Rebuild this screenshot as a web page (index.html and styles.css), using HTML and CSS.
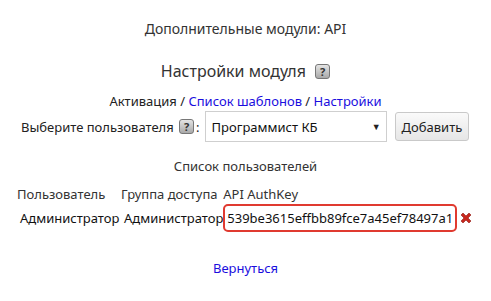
FILE: index.html
```html
<!DOCTYPE html>
<html lang="ru">
<head>
    <meta charset="UTF-8">
    <title>Дополнительные модули: API</title>
    <link rel="stylesheet" href="styles.css">
</head>
<body>
    <div class="page">
        <h1 class="title">Дополнительные модули: API</h1>

        <h2 class="subtitle">Настройки модуля <span class="help">?</span></h2>

        <div class="nav">
            <span>Активация</span> / <a href="#">Список шаблонов</a> / <a href="#">Настройки</a>
        </div>

        <!-- user picker -->
        <div class="pick-row">
            <label class="pick-label">Выберите пользователя <span class="help small">?</span>:</label>
            <div class="select-box">
                <span>Программист КБ</span>
                <span class="arrow">&#9660;</span>
            </div>
            <button class="btn">Добавить</button>
        </div>

        <div class="list-title">Список пользователей</div>

        <table class="users">
            <tr>
                <th class="col-user">Пользователь</th>
                <th class="col-group">Группа доступа</th>
                <th>API AuthKey</th>
                <th></th>
            </tr>
            <tr>
                <td>Администратор</td>
                <td>Администратор</td>
                <td class="key-cell"><span class="key">539be3615effbb89fce7a45ef78497a1</span></td>
                <td class="key-cell">
                    <svg class="del" width="14" height="14" viewBox="0 0 14 14">
                        <path d="M2 4 L4 2 L7 5 L10 2 L12 4 L9 7 L12 10 L10 12 L7 9 L4 12 L2 10 L5 7 Z" fill="#c8281e" stroke="#8e1a12" stroke-width="0.6"/>
                    </svg>
                </td>
            </tr>
        </table>

        <div class="back"><a href="#">Вернуться</a></div>
    </div>
</body>
</html>
```

FILE: styles.css
```css
body {
    margin: 0;
    font-family: "Noto Sans", "Open Sans", sans-serif;
    font-size: 13px;
    color: #222;
    background: #fff;
}

a {
    color: #1a0dde;
    text-decoration: none;
}

.page {
    width: 491px;
    text-align: center;
}

.title {
    margin: 0;
    padding-top: 19px;
    font-size: 14px;
    font-weight: normal;
    color: #333;
    line-height: 20px;
}

.subtitle {
    margin: 0;
    margin-top: 21px;
    font-size: 16px;
    font-weight: normal;
    color: #333;
    line-height: 22px;
}

/* grey question mark button */
.help {
    display: inline-block;
    width: 13px;
    height: 13px;
    margin-left: 5px;
    border: 1px solid #777;
    border-radius: 3px;
    background: linear-gradient(#e4e4e4, #a9a9a9);
    color: #333;
    font-size: 11px;
    font-weight: bold;
    line-height: 13px;
    text-align: center;
    vertical-align: 1px;
}

.help.small {
    margin-left: 2px;
    margin-right: 2px;
}

.nav {
    margin-top: 10px;
    line-height: 18px;
}

.pick-row {
    display: flex;
    align-items: center;
    padding-left: 21px;
    margin-top: 1px;
}

.pick-label {
    margin-right: 5px;
}

.select-box {
    display: flex;
    justify-content: space-between;
    align-items: center;
    width: 182px;
    height: 31px;
    padding: 0 5px 0 6px;
    box-sizing: border-box;
    border: 1px solid #cfcfcf;
    background: #fff;
    color: #111;
}

.arrow {
    font-size: 9px;
    color: #222;
}

.btn {
    margin-left: 8px;
    width: 74px;
    height: 29px;
    border: 1px solid #c9c9c9;
    border-radius: 3px;
    background: linear-gradient(#fafafa, #e6e6e6);
    font-family: inherit;
    font-size: 13px;
    color: #222;
}

.list-title {
    margin-top: 15px;
    color: #333;
    line-height: 18px;
}

.users {
    margin-top: 9px;
    margin-left: 17px;
    border-collapse: collapse;
    text-align: left;
}

.users th {
    font-weight: normal;
    color: #333;
    padding: 0;
    height: 20px;
}

.col-user {
    width: 104px;
}

.col-group {
    width: 101px;
}

.users td {
    padding: 0 0 0 3px;
    color: #111;
}

.users td.key-cell {
    padding: 0;
}

.key {
    display: inline-block;
    padding: 3px 2px;
    border: 2px solid #e03a30;
    border-radius: 5px;
}

.del {
    display: block;
    margin-left: 2px;
}

.back {
    margin-top: 27px;
}
```
